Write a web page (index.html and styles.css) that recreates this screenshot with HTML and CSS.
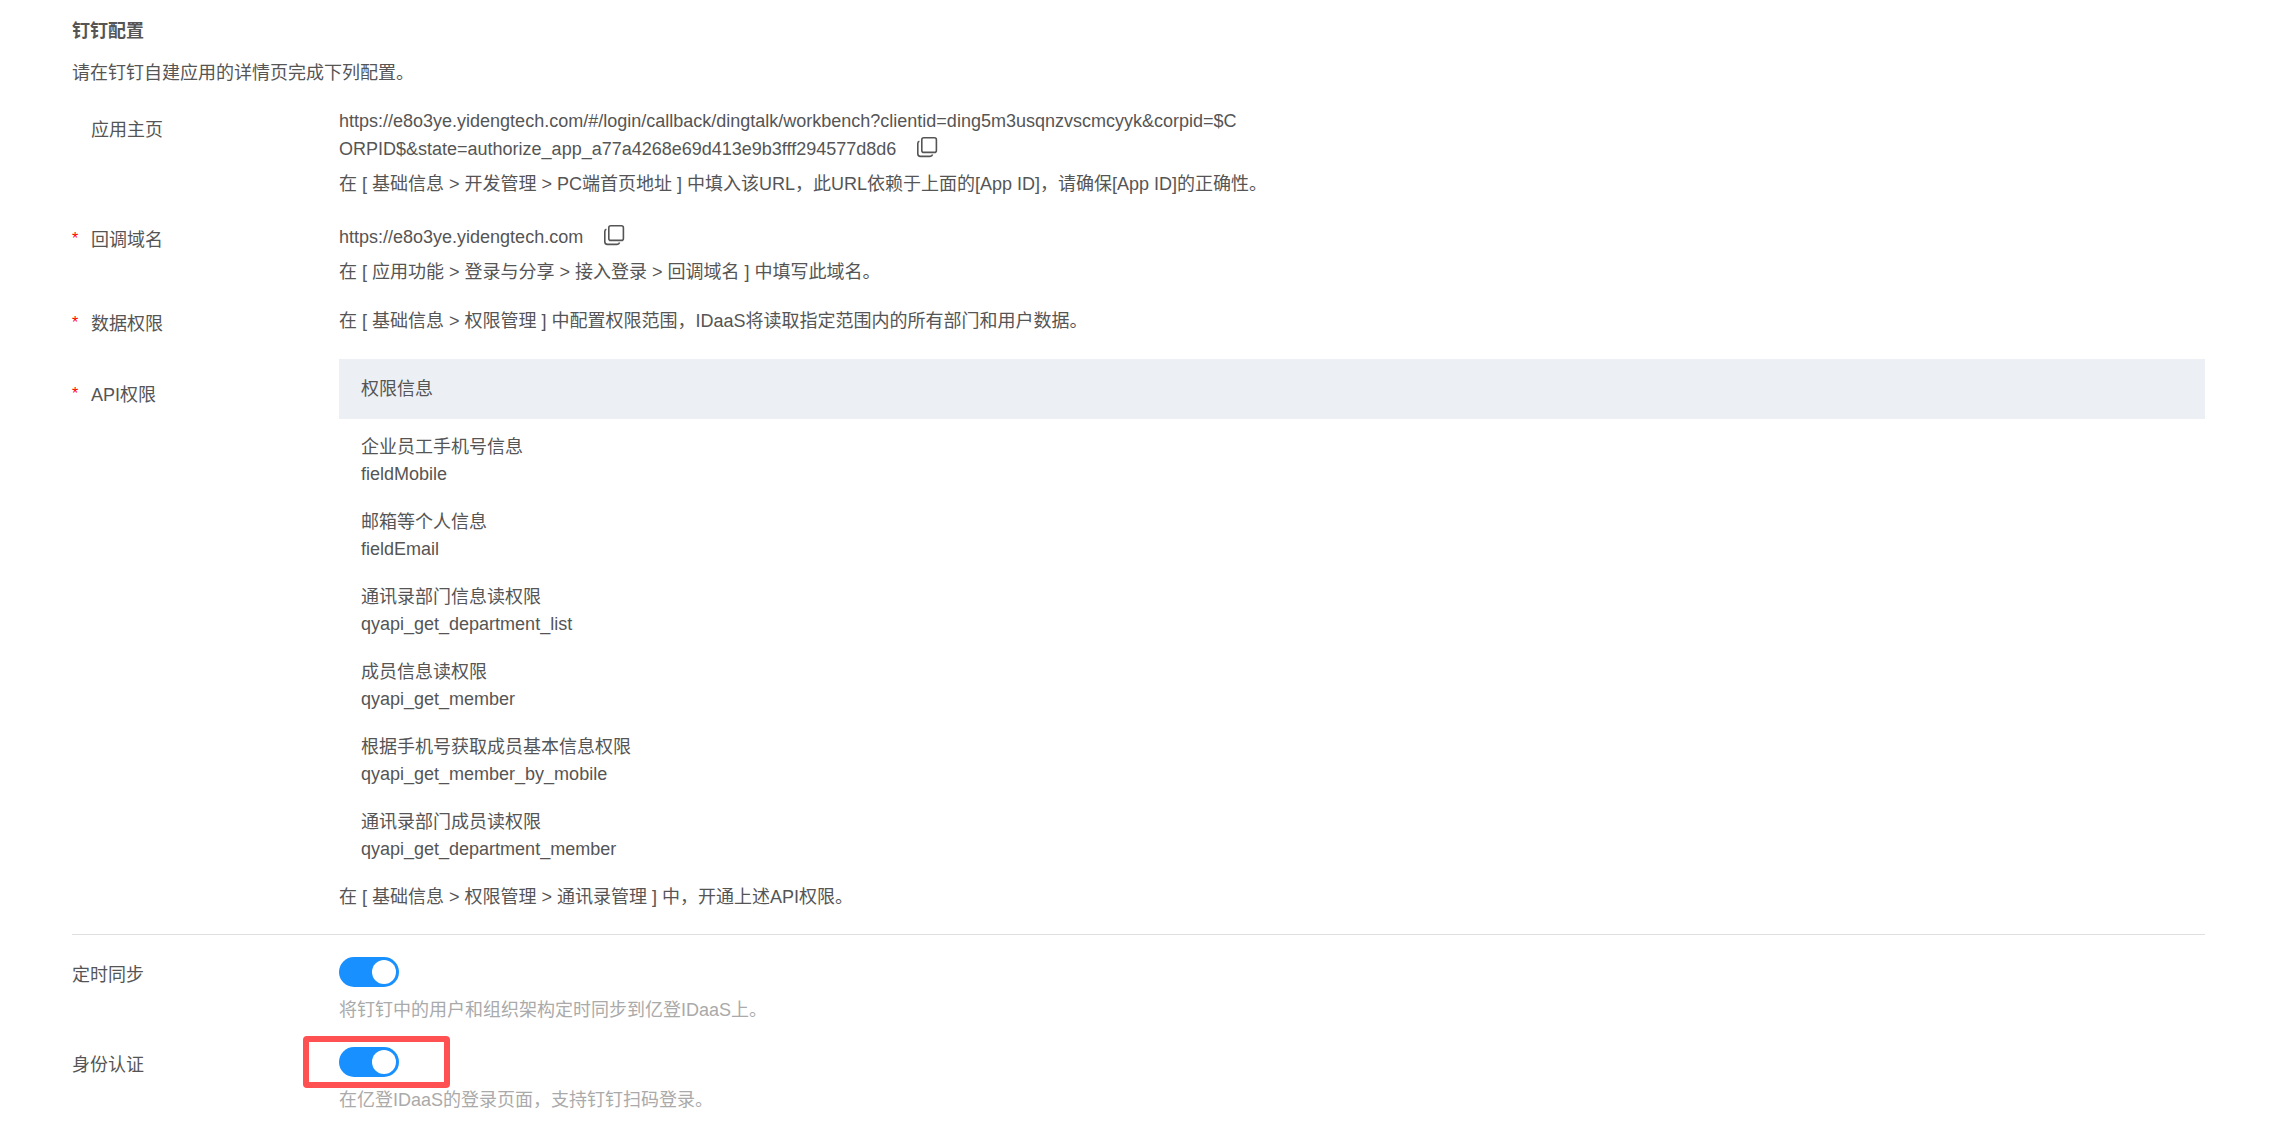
FILE: index.html
```html
<!DOCTYPE html>
<html lang="zh-CN">
<head>
    <meta charset="UTF-8">
    <meta name="viewport" content="width=device-width, initial-scale=1.0">
    <title>钉钉配置</title>
    <link rel="stylesheet" href="styles.css">
</head>
<body>
    <main class="container">
        <h1>钉钉配置</h1>
        <p class="intro">请在钉钉自建应用的详情页完成下列配置。</p>

        <!-- 钉钉应用配置 -->
        <section class="config">
            <div class="row row-home">
                <div class="label indent">应用主页</div>
                <div class="value">
                    <div class="url">https://e8o3ye.yidengtech.com/#/login/callback/dingtalk/workbench?clientid=ding5m3usqnzvscmcyyk&amp;corpid=$CORPID$&amp;state=authorize_app_a77a4268e69d413e9b3fff294577d8d6<button type="button" class="copy" aria-label="复制应用主页"><svg viewBox="0 0 22 22" width="22" height="22"><rect x="5.8" y="1.8" width="14.6" height="14.6" rx="2"/><path d="M3.4 5.2Q1.8 5.6 1.8 7.4V17.8Q1.8 20.4 4.4 20.4H14Q16 20.4 16.6 18.6"/></svg></button></div>
                    <p class="help">在 [ 基础信息 &gt; 开发管理 &gt; PC端首页地址 ] 中填入该URL，此URL依赖于上面的[App ID]，请确保[App ID]的正确性。</p>
                </div>
            </div>
            <div class="row row-domain">
                <div class="label indent required">回调域名</div>
                <div class="value">
                    <div class="url">https://e8o3ye.yidengtech.com<button type="button" class="copy" aria-label="复制回调域名"><svg viewBox="0 0 22 22" width="22" height="22"><rect x="5.8" y="1.8" width="14.6" height="14.6" rx="2"/><path d="M3.4 5.2Q1.8 5.6 1.8 7.4V17.8Q1.8 20.4 4.4 20.4H14Q16 20.4 16.6 18.6"/></svg></button></div>
                    <p class="help">在 [ 应用功能 &gt; 登录与分享 &gt; 接入登录 &gt; 回调域名 ] 中填写此域名。</p>
                </div>
            </div>
            <div class="row row-data">
                <div class="label indent required">数据权限</div>
                <div class="value">在 [ 基础信息 &gt; 权限管理 ] 中配置权限范围，IDaaS将读取指定范围内的所有部门和用户数据。</div>
            </div>
            <div class="row row-api">
                <div class="label indent required">API权限</div>
                <div class="value">
                    <table class="permissions">
                        <thead>
                            <tr><th>权限信息</th></tr>
                        </thead>
                        <tbody>
                            <tr><td>企业员工手机号信息<br>fieldMobile</td></tr>
                            <tr><td>邮箱等个人信息<br>fieldEmail</td></tr>
                            <tr><td>通讯录部门信息读权限<br>qyapi_get_department_list</td></tr>
                            <tr><td>成员信息读权限<br>qyapi_get_member</td></tr>
                            <tr><td>根据手机号获取成员基本信息权限<br>qyapi_get_member_by_mobile</td></tr>
                            <tr><td>通讯录部门成员读权限<br>qyapi_get_department_member</td></tr>
                        </tbody>
                    </table>
                    <p class="help">在 [ 基础信息 &gt; 权限管理 &gt; 通讯录管理 ] 中，开通上述API权限。</p>
                </div>
            </div>
        </section>

        <!-- 功能开关 -->
        <section class="switches">
            <div class="row">
                <label class="label" for="syncSwitch">定时同步</label>
                <div class="value">
                    <div class="switch-box">
                        <input type="checkbox" id="syncSwitch" class="switch" checked>
                    </div>
                    <p class="hint">将钉钉中的用户和组织架构定时同步到亿登IDaaS上。</p>
                </div>
            </div>
            <div class="row">
                <label class="label" for="authSwitch">身份认证</label>
                <div class="value">
                    <div class="switch-box highlight">
                        <input type="checkbox" id="authSwitch" class="switch" checked>
                    </div>
                    <p class="hint">在亿登IDaaS的登录页面，支持钉钉扫码登录。</p>
                </div>
            </div>
        </section>
    </main>
</body>
</html>
```
FILE: styles.css
```css
* {
    box-sizing: border-box;
}
body {
    margin: 0;
    background: #fff;
    color: #555;
    font-family: "Liberation Sans", "Noto Sans CJK SC", sans-serif;
    font-size: 18px;
    line-height: 27px;
}
p {
    margin: 0;
}
.container {
    padding: 18px 75px 32px 72px;
}
.container h1 {
    margin: 0 0 15px;
    font-size: 18px;
    font-weight: bold;
}
.intro {
    margin-bottom: 20px;
}
.row {
    display: grid;
    grid-template-columns: 267px 1fr;
}
.label {
    padding-top: 10px;
}
.indent {
    position: relative;
    padding-left: 19px;
}
.required::before {
    content: "*";
    position: absolute;
    left: 0;
    color: #f00;
    font-size: 16px;
    line-height: 24px;
}
.url {
    max-width: 900px;
    line-height: 28px;
    word-break: break-all;
}
.copy {
    margin: 0 0 0 20px;
    padding: 0;
    border: none;
    background: none;
    height: 22px;
    vertical-align: -3px;
    cursor: pointer;
}
.copy svg {
    display: block;
    fill: none;
    stroke: #555;
    stroke-width: 1.6;
}
.help {
    margin-top: 8px;
}
.row-home {
    margin-bottom: 25px;
}
.row-domain {
    margin-bottom: 22px;
}
.row-data {
    margin-bottom: 21px;
}
.row-domain .label {
    padding-top: 4px;
}
.row-data .label {
    padding-top: 3px;
}
.row-api .label {
    padding-top: 23px;
}
.row-api .help {
    margin-top: 15px;
}
.permissions {
    width: 100%;
    border-collapse: collapse;
}
.permissions th {
    padding: 17px 22px 16px;
    background: #ecf0f5;
    font-weight: normal;
    text-align: left;
}
.permissions td {
    padding: 15px 22px 6px;
}
.switches {
    margin-top: 23px;
    padding-top: 22px;
    border-top: 1px solid #dfdfdf;
}
.switches .row {
    margin-bottom: 23px;
}
.switches .label {
    padding-top: 5px;
}
.switch-box {
    position: relative;
    width: 60px;
    height: 30px;
}
.switch {
    appearance: none;
    display: flex;
    justify-content: flex-end;
    width: 60px;
    height: 30px;
    margin: 0;
    padding: 3px;
    border-radius: 15px;
    background: #1890ff;
    cursor: pointer;
}
.switch::before {
    content: "";
    width: 24px;
    height: 24px;
    border-radius: 50%;
    background: #fff;
}
.switch:not(:checked) {
    justify-content: flex-start;
    background: #bfbfbf;
}
.highlight::after {
    content: "";
    position: absolute;
    inset: -11px -51px -11px -36px;
    border: 6px solid #ff5151;
    border-radius: 4px;
    pointer-events: none;
}
.hint {
    margin-top: 10px;
    color: #aaa;
}
```
